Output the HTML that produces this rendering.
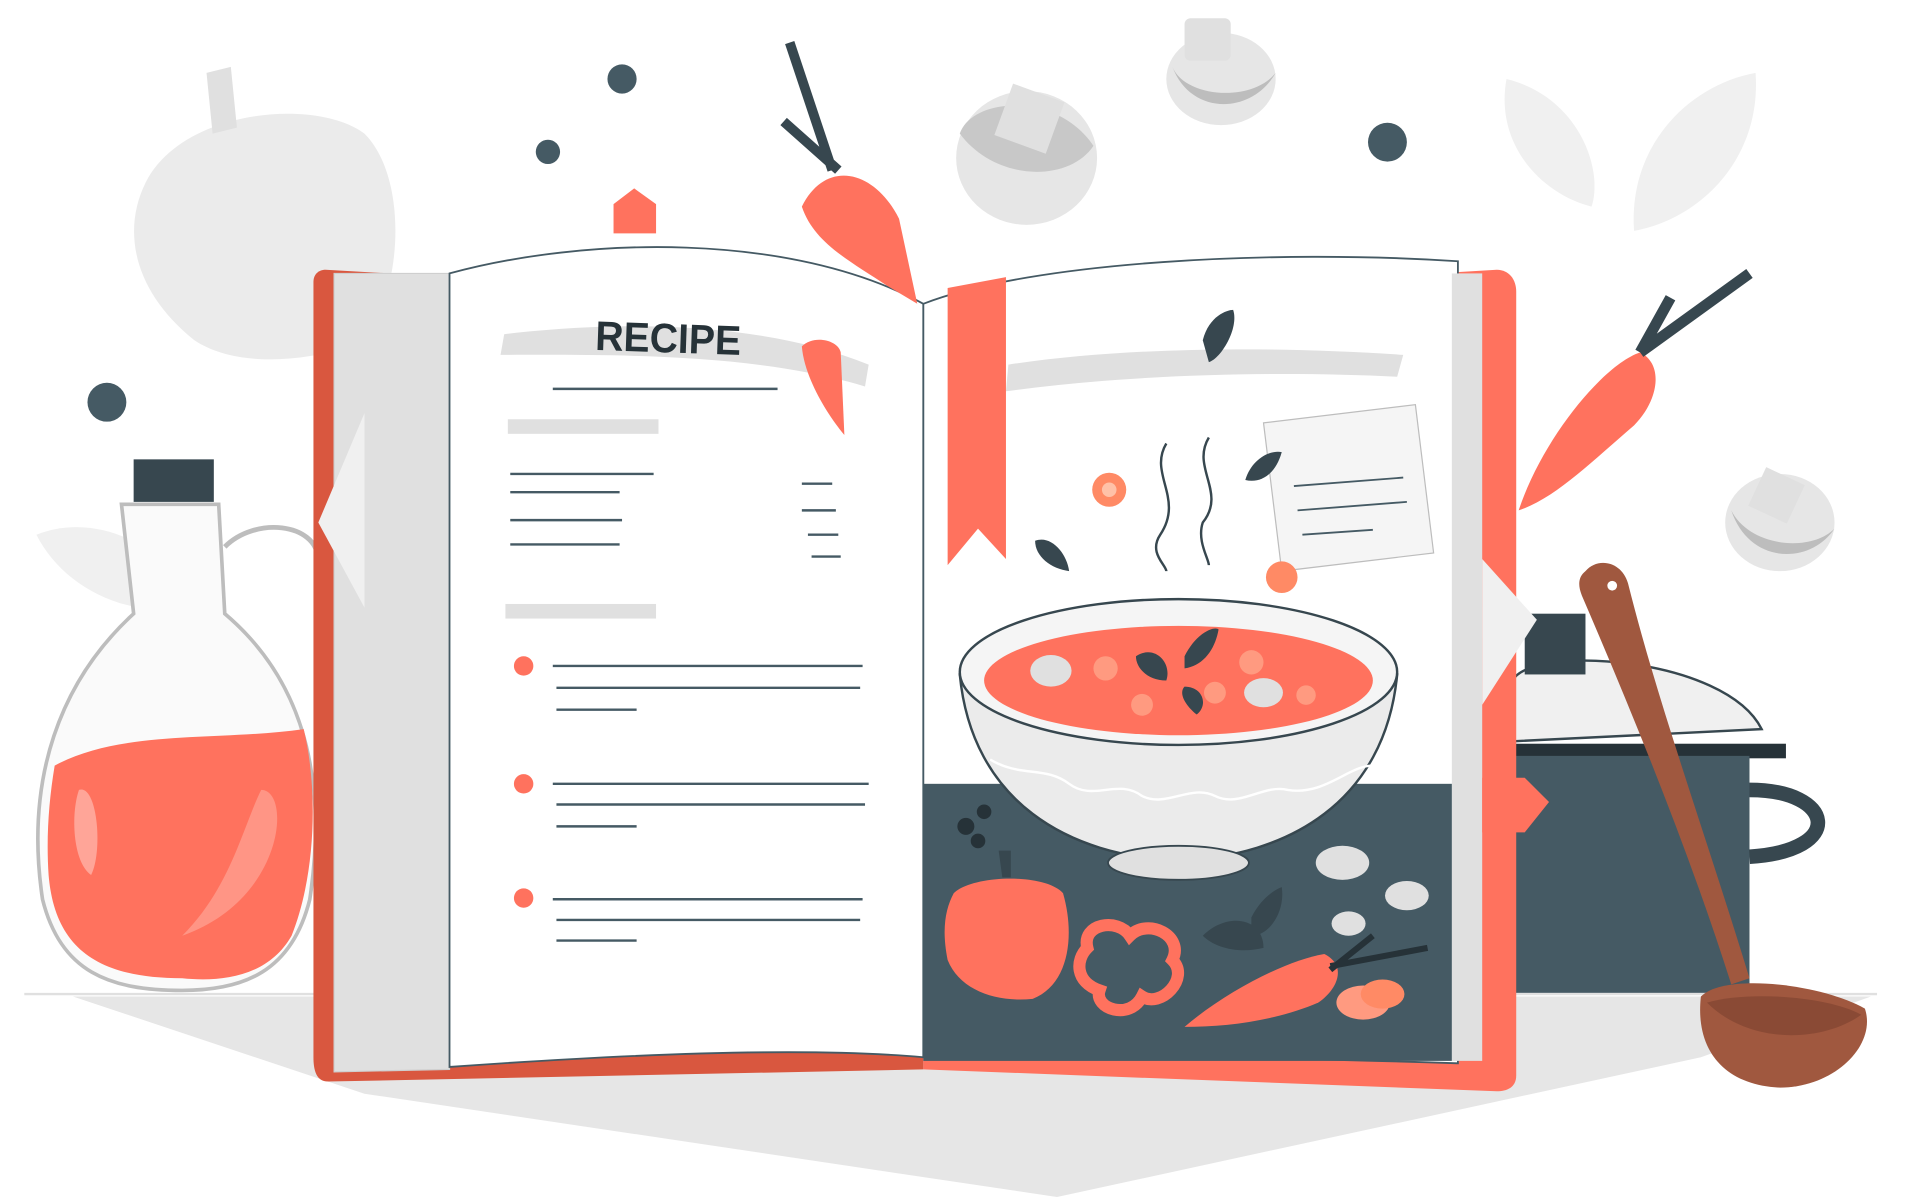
<!DOCTYPE html>
<html><head><meta charset="utf-8"><style>
html,body{margin:0;padding:0;background:#fff;overflow:hidden}
svg{display:block}
</style></head><body>
<svg width="1905" height="1197" viewBox="0 0 1568 985" preserveAspectRatio="none" xmlns="http://www.w3.org/2000/svg">
<rect width="1568" height="985" fill="#fff"/>
<polygon points="60,820 1540,820 1400,870 870,985 300,900" fill="#e6e6e6"/>
<line x1="20" y1="818" x2="1545" y2="818" stroke="#e0e0e0" stroke-width="2"/>
<path d="M120,150 C150,90 260,80 300,110 C340,150 330,260 290,285 C240,300 190,300 160,280 C110,240 100,190 120,150Z" fill="#ebebeb"/>
<path d="M175,110 L170,60 L190,55 L195,105Z" fill="#e0e0e0"/>
<path d="M1240,65 C1300,80 1320,140 1310,170 C1270,160 1230,120 1240,65Z" fill="#f0f0f0"/>
<path d="M1445,60 C1450,130 1400,180 1345,190 C1340,120 1390,70 1445,60Z" fill="#f0f0f0"/>
<path d="M30,440 C80,420 140,450 160,500 C100,510 50,480 30,440Z" fill="#f0f0f0"/>
<ellipse cx="845" cy="130" rx="58" ry="55" fill="#e6e6e6"/>
<path d="M790,110 C800,80 870,75 900,120 C880,150 820,150 790,110Z" fill="#c8c8c8"/>
<rect x="825" y="75" width="45" height="45" fill="#e0e0e0" transform="rotate(20 847 97)"/>
<ellipse cx="1005" cy="65" rx="45" ry="38" fill="#e6e6e6"/>
<path d="M965,55 C975,80 1030,85 1050,60 C1030,95 980,95 965,55Z" fill="#bdbdbd"/>
<rect x="975" y="15" width="38" height="35" rx="5" fill="#e0e0e0"/>
<ellipse cx="1465" cy="430" rx="45" ry="40" fill="#e6e6e6"/>
<path d="M1425,420 C1440,450 1490,455 1510,435 C1490,465 1440,465 1425,420Z" fill="#bdbdbd"/>
<rect x="1445" y="390" width="35" height="35" fill="#e0e0e0" transform="rotate(25 1462 407)"/>
<circle cx="512" cy="65" r="12" fill="#455a64"/>
<circle cx="451" cy="125" r="10" fill="#455a64"/>
<circle cx="1142" cy="117" r="16" fill="#455a64"/>
<circle cx="88" cy="331" r="16" fill="#455a64"/>
<circle cx="938" cy="336" r="7" fill="#455a64"/>
<rect x="110" y="378" width="66" height="35" fill="#37474f"/>
<path d="M100,415 L180,415 L185,505 C250,560 270,640 255,740 C240,800 200,815 150,815 C90,815 50,800 35,740 C20,640 50,560 110,505Z" fill="#fafafa" stroke="#bdbdbd" stroke-width="3"/>
<path d="M185,450 C210,425 260,430 262,460" fill="none" stroke="#bdbdbd" stroke-width="4"/>
<path d="M45,630 C100,600 180,610 250,600 C262,650 260,720 240,770 C220,805 180,808 150,805 C80,805 45,780 40,720 C38,690 40,660 45,630Z" fill="#ff725e"/>
<path d="M65,650 C80,645 85,700 75,720 C60,710 58,670 65,650Z" fill="#ffa598"/>
<path d="M215,650 C240,650 235,740 150,770 C190,730 200,680 215,650Z" fill="#ff9585"/>
<path d="M1245,560 C1260,530 1420,540 1450,600 L1245,610Z" fill="#f0f0f0" stroke="#37474f" stroke-width="2"/>
<rect x="1255" y="505" width="50" height="50" fill="#37474f"/>
<rect x="1240" y="612" width="230" height="12" fill="#263238"/>
<rect x="1245" y="622" width="195" height="195" fill="#455a64"/>
<path d="M1440,650 C1510,650 1520,700 1440,705" fill="none" stroke="#37474f" stroke-width="12"/>
<path d="M268,222 L760,250 L760,880 L270,890 C260,890 258,880 258,870 L258,232 C258,226 262,222 268,222Z" fill="#d9573f"/>
<path d="M760,250 L1232,222 C1242,222 1248,230 1248,240 L1248,885 C1248,895 1240,898 1232,898 L760,880Z" fill="#ff725e"/>
<path d="M275,225 L370,225 L370,880 L275,882Z" fill="#e0e0e0" stroke="#cfcfcf"/>
<path d="M370,225 C480,195 650,190 760,250 L760,870 C650,860 480,870 370,878Z" fill="#fff" stroke="#455a64" stroke-width="1.5"/>
<path d="M760,250 C850,215 1050,205 1200,215 L1200,875 C1050,870 850,868 760,870Z" fill="#fff" stroke="#455a64" stroke-width="1.5"/>
<rect x="1195" y="225" width="25" height="648" fill="#e0e0e0"/>
<rect x="760" y="645" width="435" height="228" fill="#455a64"/>
<path d="M505,192 L505,168 L522,155 L540,168 L540,192Z" fill="#ff725e"/>
<path d="M780,237 L828,228 L828,460 L805,435 L780,465Z" fill="#ff725e"/>
<path d="M1220,640 L1255,640 L1275,660 L1255,685 L1220,685Z" fill="#ff725e"/>
<path d="M262,430 L300,340 L300,500Z" fill="#f0f0f0"/>
<path d="M1220,460 L1265,510 L1220,580Z" fill="#f0f0f0"/>
<path d="M415,275 C500,265 620,262 715,300 L712,318 C620,290 500,292 412,292Z" fill="#e0e0e0"/>
<text x="490" y="290" textLength="120" lengthAdjust="spacingAndGlyphs" font-family="Liberation Sans, sans-serif" font-weight="bold" font-size="34" fill="#263238" transform="rotate(2 550 280)">RECIPE</text>
<g stroke="#455a64" stroke-width="2">
<line x1="455" y1="320" x2="640" y2="320"/>
<line x1="420" y1="390" x2="538" y2="390"/>
<line x1="420" y1="405" x2="510" y2="405"/>
<line x1="420" y1="428" x2="512" y2="428"/>
<line x1="420" y1="448" x2="510" y2="448"/>
<line x1="660" y1="398" x2="685" y2="398"/>
<line x1="660" y1="420" x2="688" y2="420"/>
<line x1="665" y1="440" x2="690" y2="440"/>
<line x1="668" y1="458" x2="692" y2="458"/>
<line x1="455" y1="548" x2="710" y2="548"/><line x1="458" y1="566" x2="708" y2="566"/><line x1="458" y1="584" x2="524" y2="584"/>
<line x1="455" y1="645" x2="715" y2="645"/><line x1="458" y1="662" x2="712" y2="662"/><line x1="458" y1="680" x2="524" y2="680"/>
<line x1="455" y1="740" x2="710" y2="740"/><line x1="458" y1="757" x2="708" y2="757"/><line x1="458" y1="774" x2="524" y2="774"/>
</g>
<rect x="418" y="345" width="124" height="12" fill="#e0e0e0"/>
<rect x="416" y="497" width="124" height="12" fill="#e0e0e0"/>
<circle cx="431" cy="548" r="8" fill="#ff725e"/>
<circle cx="431" cy="645" r="8" fill="#ff725e"/>
<circle cx="431" cy="739" r="8" fill="#ff725e"/>
<path d="M830,300 C930,285 1050,285 1155,292 L1150,310 C1050,305 930,308 828,322Z" fill="#e0e0e0"/>
<path d="M990,280 C995,260 1010,255 1015,255 C1020,270 1005,295 995,298Z" fill="#37474f"/>
<path d="M1040,348 L1165,333 L1180,455 L1055,470Z" fill="#f5f5f5" stroke="#bdbdbd"/>
<g stroke="#455a64" stroke-width="1.5"><line x1="1065" y1="400" x2="1155" y2="393"/><line x1="1068" y1="420" x2="1158" y2="413"/><line x1="1072" y1="440" x2="1130" y2="436"/></g>
<path d="M660,170 C680,130 720,140 740,180 L755,250 L730,235 C700,215 670,200 660,170Z" fill="#ff725e"/>
<path d="M685,140 L650,35 M690,140 L645,100" stroke="#37474f" stroke-width="8"/>
<path d="M660,285 C670,275 690,280 692,290 L695,358 C680,340 662,310 660,285Z" fill="#ff725e"/>
<path d="M1250,420 C1270,360 1320,300 1350,290 C1370,300 1365,330 1345,350 C1310,380 1280,410 1250,420Z" fill="#ff725e"/>
<path d="M1350,290 L1440,225 M1350,290 L1375,245" stroke="#37474f" stroke-width="9"/>
<path d="M960,365 C945,390 975,410 955,440 C945,455 960,465 960,470 M995,360 C980,385 1010,405 990,430 C985,445 995,460 995,465" fill="none" stroke="#37474f" stroke-width="2"/>
<circle cx="913" cy="403" r="14" fill="#ff8a65"/><circle cx="913" cy="403" r="6" fill="#ffc1a8"/>
<circle cx="1055" cy="475" r="13" fill="#ff8a65"/>
<path d="M852,445 C865,440 878,455 880,470 C865,468 852,458 852,445Z" fill="#37474f"/>
<path d="M1025,395 C1030,378 1045,370 1055,372 C1050,390 1038,398 1025,395Z" fill="#37474f"/>
<path d="M790,555 C800,660 880,705 970,708 C1060,705 1140,660 1150,555Z" fill="#ebebeb" stroke="#37474f" stroke-width="2"/>
<ellipse cx="970" cy="710" rx="58" ry="14" fill="#e0e0e0" stroke="#37474f" stroke-width="1.5"/>
<ellipse cx="970" cy="553" rx="180" ry="60" fill="#f5f5f5" stroke="#37474f" stroke-width="2"/>
<ellipse cx="970" cy="560" rx="160" ry="45" fill="#ff725e"/>
<path d="M815,625 C840,640 860,630 880,645 C900,660 920,640 940,655 C960,665 980,645 1000,655 C1020,665 1040,645 1060,650 C1090,655 1110,630 1130,630" fill="none" stroke="#fff" stroke-width="2"/>
<circle cx="910" cy="550" r="10" fill="#ff9a80"/><circle cx="1030" cy="545" r="10" fill="#ff9a80"/><circle cx="1000" cy="570" r="9" fill="#ff9a80"/><circle cx="940" cy="580" r="9" fill="#ff9a80"/><circle cx="1075" cy="572" r="8" fill="#ff9a80"/>
<path d="M935,540 C950,530 965,545 960,560 C945,560 935,550 935,540Z M975,540 C985,520 1000,515 1003,518 C1000,535 990,548 975,550Z M975,565 C990,565 995,580 985,588 C975,580 970,570 975,565Z" fill="#37474f"/>
<ellipse cx="865" cy="552" rx="17" ry="13" fill="#e0e0e0"/><ellipse cx="1040" cy="570" rx="16" ry="12" fill="#e0e0e0"/>
<circle cx="795" cy="680" r="7" fill="#263238"/><circle cx="810" cy="668" r="6" fill="#263238"/><circle cx="805" cy="692" r="6" fill="#263238"/>
<path d="M785,735 C800,720 860,718 875,735 C885,770 880,810 850,822 C820,825 790,815 780,790 C775,765 778,748 785,735Z" fill="#ff725e"/>
<path d="M825,722 L822,700 L832,700 L832,722Z" fill="#37474f"/>
<path d="M895,780 C890,760 920,755 930,770 C945,755 975,770 965,790 C980,805 955,830 940,820 C930,840 900,830 905,815 C885,808 885,790 895,780Z" fill="none" stroke="#ff725e" stroke-width="10"/>
<path d="M975,845 C1010,815 1060,790 1090,785 C1110,795 1100,815 1085,825 C1050,840 1010,845 975,845Z" fill="#ff725e"/>
<path d="M1095,795 L1175,780 M1095,798 L1130,770" stroke="#263238" stroke-width="5"/>
<ellipse cx="1122" cy="825" rx="22" ry="14" fill="#ff9a80"/><ellipse cx="1138" cy="818" rx="18" ry="12" fill="#ff8a65"/>
<path d="M990,770 C1010,750 1040,755 1040,780 C1020,785 1000,780 990,770Z M1030,755 C1040,735 1055,730 1055,730 C1058,750 1045,770 1030,770Z" fill="#37474f"/>
<g fill="#e0e0e0"><ellipse cx="1105" cy="710" rx="22" ry="14"/><ellipse cx="1158" cy="737" rx="18" ry="12"/><ellipse cx="1110" cy="760" rx="14" ry="10"/></g>
<path d="M1305,470 C1315,458 1335,462 1340,480 C1365,580 1405,690 1440,805 L1425,810 C1390,700 1345,590 1302,490 C1298,480 1300,474 1305,470Z" fill="#a0583f"/>
<circle cx="1327" cy="482" r="4" fill="#fff"/>
<path d="M1400,820 C1420,800 1500,810 1535,830 C1545,860 1510,895 1465,895 C1420,893 1395,865 1400,820Z" fill="#a0583f"/>
<path d="M1405,825 C1440,815 1505,820 1532,835 C1500,858 1440,860 1405,825Z" fill="#8a4a35"/>
</svg>
</body></html>
